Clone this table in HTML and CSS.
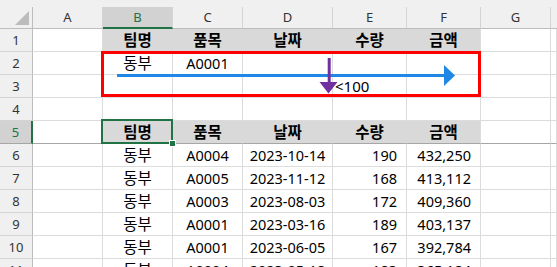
FILE: index.html
```html
<!DOCTYPE html>
<html lang="ko">
<head>
    <meta charset="UTF-8">
    <meta name="viewport" content="width=device-width, initial-scale=1.0">
    <title>시트</title>
    <link rel="stylesheet" href="styles.css">
</head>
<body>
    <div class="sheet">
        <div class="band"></div>
        <div class="row head">
            <div class="cell hdr corner"><span class="tri"></span></div>
            <div class="cell hdr">A</div>
            <div class="cell hdr sel">B</div>
            <div class="cell hdr">C</div>
            <div class="cell hdr">D</div>
            <div class="cell hdr">E</div>
            <div class="cell hdr">F</div>
            <div class="cell hdr">G</div>
            <div class="cell hdr last"></div>
        </div>
        <div class="row">
            <div class="cell rh">1</div>
            <div class="cell"></div>
            <div class="cell fill b ko">팀명</div>
            <div class="cell fill b ko">품목</div>
            <div class="cell fill b ko">날짜</div>
            <div class="cell fill b ko">수량</div>
            <div class="cell fill b ko end">금액</div>
            <div class="cell"></div>
            <div class="cell"></div>
        </div>
        <div class="row">
            <div class="cell rh">2</div>
            <div class="cell"></div>
            <div class="cell ko">동부</div>
            <div class="cell">A0001</div>
            <div class="cell"></div>
            <div class="cell"></div>
            <div class="cell"></div>
            <div class="cell"></div>
            <div class="cell"></div>
        </div>
        <div class="row">
            <div class="cell rh">3</div>
            <div class="cell"></div>
            <div class="cell"></div>
            <div class="cell"></div>
            <div class="cell"></div>
            <div class="cell l">&lt;100</div>
            <div class="cell"></div>
            <div class="cell"></div>
            <div class="cell"></div>
        </div>
        <div class="row">
            <div class="cell rh">4</div>
            <div class="cell"></div>
            <div class="cell"></div>
            <div class="cell"></div>
            <div class="cell"></div>
            <div class="cell"></div>
            <div class="cell"></div>
            <div class="cell"></div>
            <div class="cell"></div>
        </div>
        <div class="row r5">
            <div class="cell rh sel">5</div>
            <div class="cell"></div>
            <div class="cell fill b ko">팀명</div>
            <div class="cell fill b ko">품목</div>
            <div class="cell fill b ko">날짜</div>
            <div class="cell fill b ko">수량</div>
            <div class="cell fill b ko end">금액</div>
            <div class="cell"></div>
            <div class="cell"></div>
        </div>
        <div class="row">
            <div class="cell rh">6</div>
            <div class="cell"></div>
            <div class="cell ko">동부</div>
            <div class="cell">A0004</div>
            <div class="cell">2023-10-14</div>
            <div class="cell num">190</div>
            <div class="cell num">432,250</div>
            <div class="cell"></div>
            <div class="cell"></div>
        </div>
        <div class="row">
            <div class="cell rh">7</div>
            <div class="cell"></div>
            <div class="cell ko">동부</div>
            <div class="cell">A0005</div>
            <div class="cell">2023-11-12</div>
            <div class="cell num">168</div>
            <div class="cell num">413,112</div>
            <div class="cell"></div>
            <div class="cell"></div>
        </div>
        <div class="row">
            <div class="cell rh">8</div>
            <div class="cell"></div>
            <div class="cell ko">동부</div>
            <div class="cell">A0003</div>
            <div class="cell">2023-08-03</div>
            <div class="cell num">172</div>
            <div class="cell num">409,360</div>
            <div class="cell"></div>
            <div class="cell"></div>
        </div>
        <div class="row">
            <div class="cell rh">9</div>
            <div class="cell"></div>
            <div class="cell ko">동부</div>
            <div class="cell">A0001</div>
            <div class="cell">2023-03-16</div>
            <div class="cell num">189</div>
            <div class="cell num">403,137</div>
            <div class="cell"></div>
            <div class="cell"></div>
        </div>
        <div class="row">
            <div class="cell rh">10</div>
            <div class="cell"></div>
            <div class="cell ko">동부</div>
            <div class="cell">A0001</div>
            <div class="cell">2023-06-05</div>
            <div class="cell num">167</div>
            <div class="cell num">392,784</div>
            <div class="cell"></div>
            <div class="cell"></div>
        </div>
        <div class="row">
            <div class="cell rh">11</div>
            <div class="cell"></div>
            <div class="cell ko">동부</div>
            <div class="cell">A0004</div>
            <div class="cell">2023-05-18</div>
            <div class="cell num">183</div>
            <div class="cell num">365,184</div>
            <div class="cell"></div>
            <div class="cell"></div>
        </div>

        <!-- active cell B5 -->
        <div class="active"><span class="handle"></span></div>

        <!-- shapes drawn on the sheet -->
        <svg class="shapes" width="557" height="267" viewBox="0 0 557 267">
            <rect x="102.5" y="52.5" width="377" height="43" fill="none" stroke="#ff0000" stroke-width="3"/>
            <line x1="117" y1="75.5" x2="445" y2="75.5" stroke="#1f87e5" stroke-width="3"/>
            <polygon points="444,65 455,75.5 444,86" fill="#1f87e5"/>
            <line x1="329.2" y1="58" x2="329.2" y2="83" stroke="#7030a0" stroke-width="3"/>
            <polygon points="319.5,82 337.5,82 328.5,93.5" fill="#7030a0"/>
        </svg>
    </div>
</body>
</html>
```

FILE: styles.css
```css
body {
    margin: 0;
    padding: 0;
    background: #fff;
}
.sheet {
    position: relative;
    width: 557px;
    height: 267px;
    overflow: hidden;
    background: #fff;
    font-family: "Noto Sans", "Noto Sans CJK KR", sans-serif;
    color: #000;
}
.band {
    height: 7px;
    background: #f0f0f0;
}
.row {
    display: grid;
    grid-template-columns: 33px 70px 70px 70px 90px 74px 74px 70px 1fr;
    height: 23px;
}
.row.head {
    height: 22px;
}
.cell {
    box-sizing: border-box;
    border-right: 1px solid #dcdcdc;
    border-bottom: 1px solid #dcdcdc;
    display: flex;
    align-items: center;
    justify-content: center;
    font-size: 14.5px;
    line-height: 1;
    white-space: nowrap;
}
.cell.ko {
    font-size: 15.5px;
    padding-top: 2px;
}
.cell.l {
    justify-content: flex-start;
    padding-left: 2px;
    font-size: 15px;
}
.cell.num {
    justify-content: flex-end;
    padding-right: 9px;
}
.cell.b {
    font-weight: bold;
}
.cell.fill {
    background: #d9d9d9;
    border-right-color: #d9d9d9;
}
.cell.fill.end {
    border-right-color: #dcdcdc;
}
.hdr {
    background: #f0f0f0;
    border-right-color: #d4d4d4;
    border-bottom-color: #bdbdbd;
    font-size: 13px;
    color: #333;
}
.hdr.last {
    border-right: none;
}
.hdr.sel {
    background: #d2d2d2;
    color: #217346;
    border-bottom: 2px solid #217346;
}
.corner {
    border-right-color: #bdbdbd;
    justify-content: flex-end;
    align-items: flex-end;
    padding: 0 3px 3px 0;
}
.tri {
    width: 14px;
    height: 14px;
    background: #bcbcbc;
    clip-path: polygon(100% 0, 100% 100%, 0 100%);
}
.rh {
    background: #f0f0f0;
    border-right-color: #bdbdbd;
    border-bottom-color: #d4d4d4;
    font-size: 13px;
    color: #333;
}
.rh.sel {
    background: #d2d2d2;
    color: #217346;
    border-right: 2px solid #217346;
}
.row.r5 .cell {
    border-bottom-color: #a6a6a6;
}
.active {
    position: absolute;
    left: 101px;
    top: 119px;
    width: 72px;
    height: 25px;
    box-sizing: border-box;
    border: 2px solid #217346;
}
.handle {
    position: absolute;
    right: -5px;
    bottom: -5px;
    width: 5px;
    height: 5px;
    background: #217346;
    border: 1px solid #fff;
}
.shapes {
    position: absolute;
    left: 0;
    top: 0;
    pointer-events: none;
}
```
